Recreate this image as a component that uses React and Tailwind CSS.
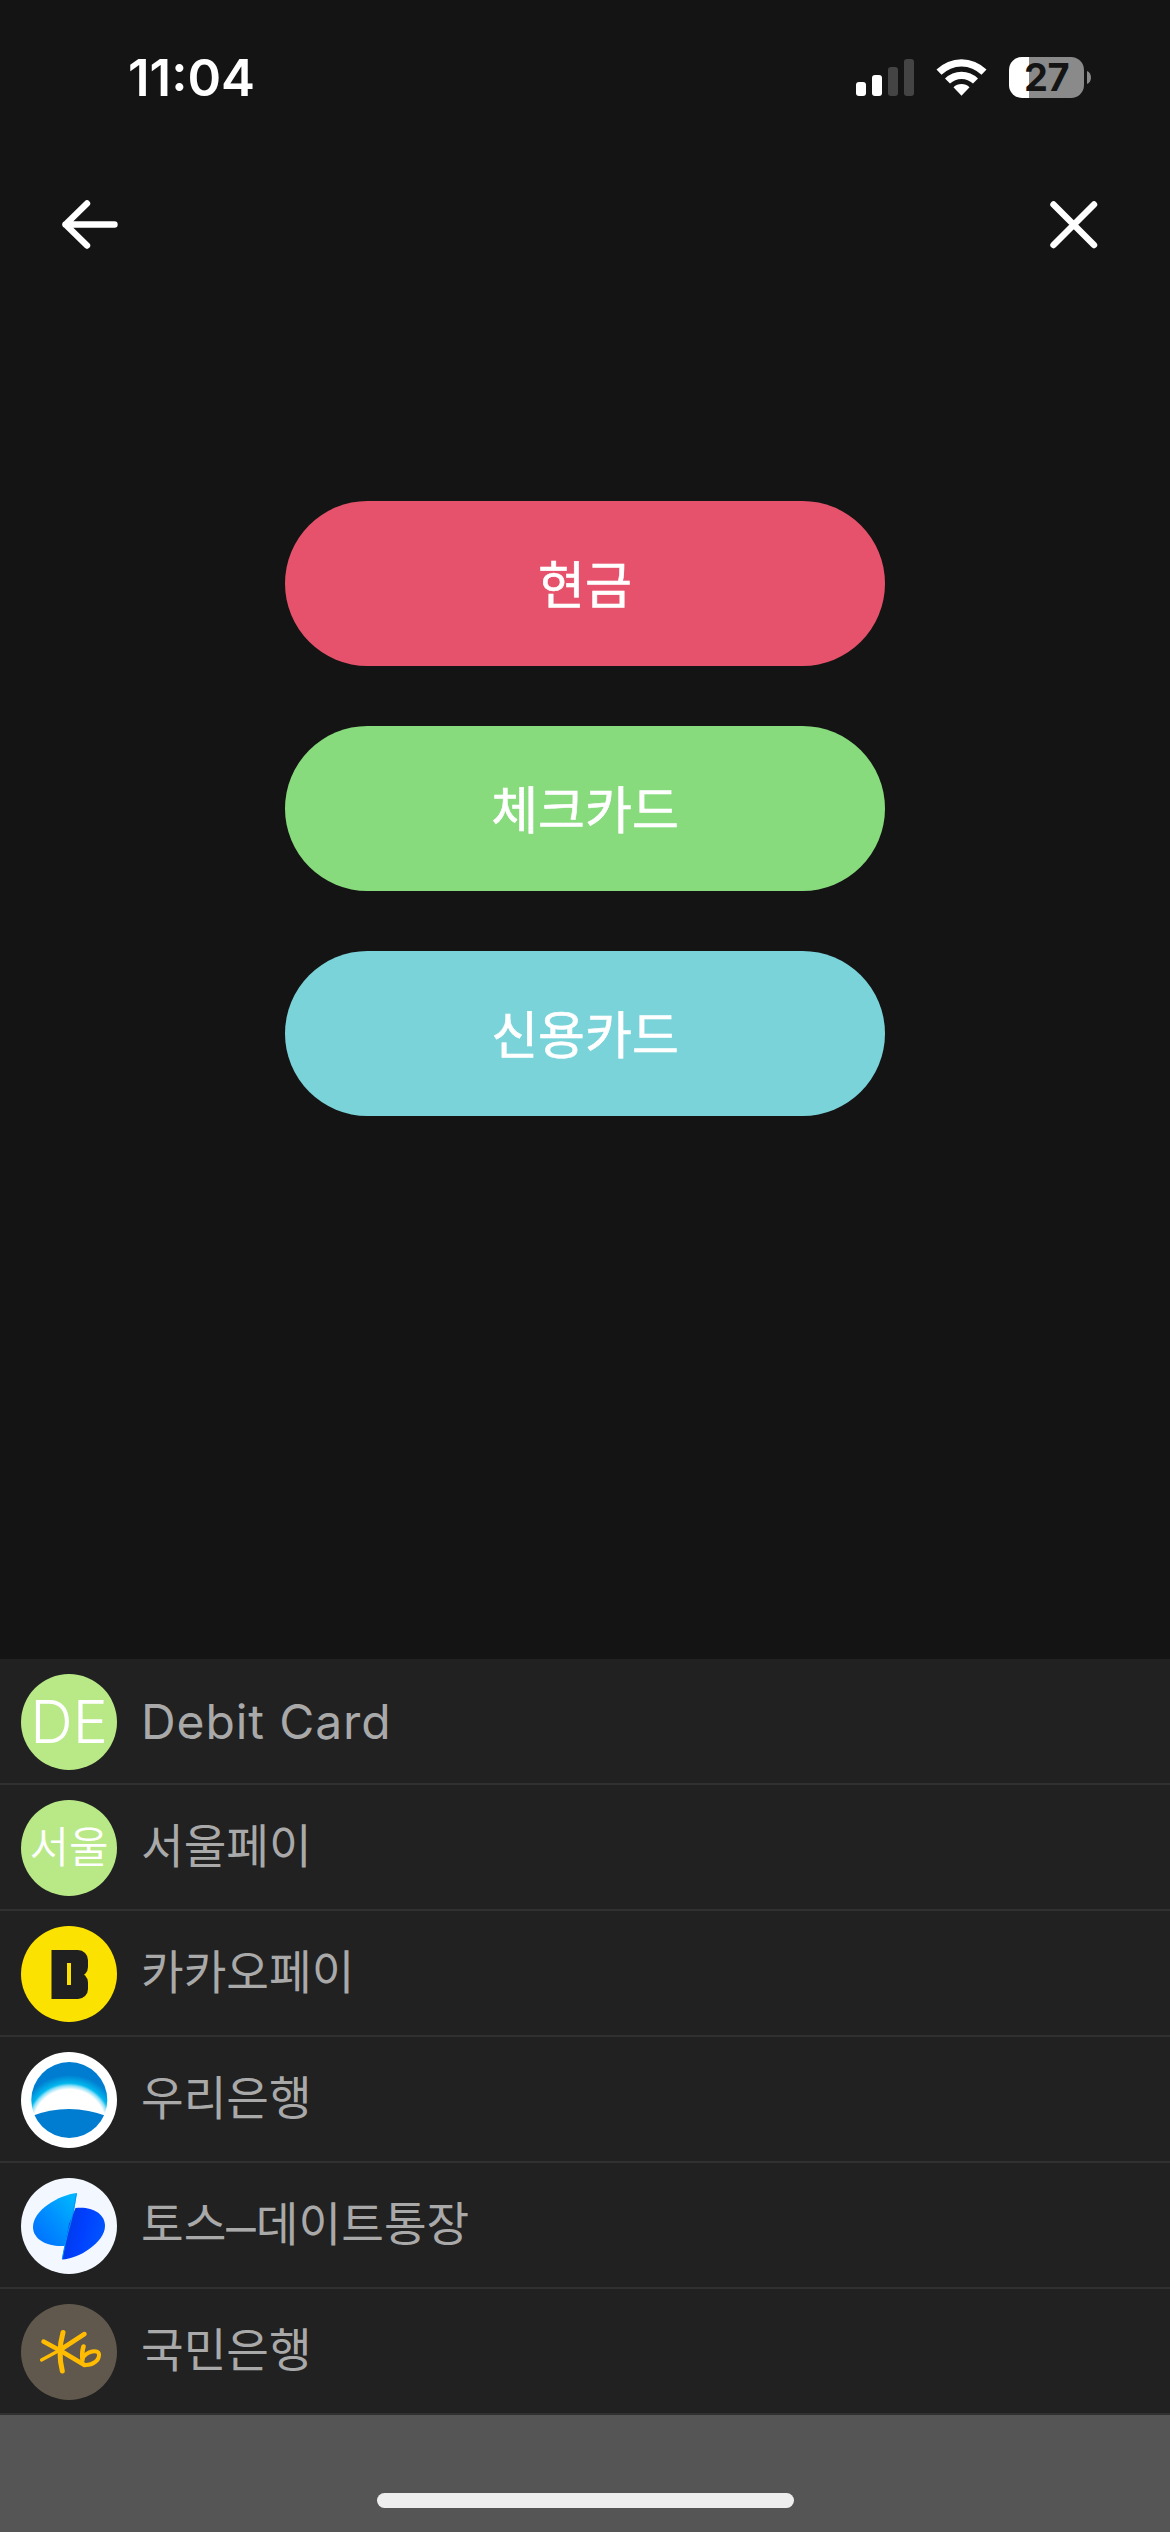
import React from 'react'

const methods = [
  { name: '현금', color: 'bg-[#e6526b]' },
  { name: '체크카드', color: 'bg-[#87db7d]' },
  { name: '신용카드', color: 'bg-[#7bd3da]' },
]

const accounts = [
  {
    name: 'Debit Card',
    icon: <Initials text="DE" className="text-[59px]" />,
    size: 'text-[48px] tracking-[0.9px] pb-0',
  },
  { name: '서울페이', icon: <Initials text="서울" className="text-[43px]" /> },
  { name: '카카오페이', icon: <KakaoLogo /> },
  { name: '우리은행', icon: <WooriLogo /> },
  {
    name: (
      <>
        토스<span className="text-[59px] leading-[0] font-light align-[-7px]">–</span>데이트통장
      </>
    ),
    icon: <TossLogo />,
  },
  { name: '국민은행', icon: <KbLogo /> },
]

function Initials({ text, className }) {
  return (
    <div className="size-24 rounded-full bg-[#b8e986] flex items-center justify-center text-white font-[350]">
      <span className={`leading-none whitespace-nowrap ${className}`}>{text}</span>
    </div>
  )
}

function KakaoLogo() {
  return (
    <svg viewBox="0 0 96 96" className="size-24">
      <circle cx="48" cy="48" r="48" fill="#fce200" />
      <g fill="#202020">
        <rect x="30.5" y="24" width="20" height="49" />
        <rect x="40" y="24" width="27" height="27" rx="10" />
        <rect x="40" y="46.5" width="27" height="26.5" rx="10" />
      </g>
      <rect x="46" y="37" width="4" height="22" fill="#fce200" />
    </svg>
  )
}

function WooriLogo() {
  return (
    <svg viewBox="0 0 96 96" className="size-24">
      <defs>
        <radialGradient id="woori-glow" gradientUnits="userSpaceOnUse" cx="48.3" cy="74" r="51">
          <stop offset="0.72" stopColor="#ffffff" />
          <stop offset="0.79" stopColor="#8ee0f8" />
          <stop offset="0.84" stopColor="#00b7ee" />
          <stop offset="1" stopColor="#007dd0" />
        </radialGradient>
        <clipPath id="woori-clip">
          <circle cx="48.3" cy="48" r="38" />
        </clipPath>
      </defs>
      <circle cx="48" cy="48" r="48" fill="#fff" />
      <g clipPath="url(#woori-clip)">
        <rect width="96" height="96" fill="url(#woori-glow)" />
        <path d="M8 65 Q48 49 88 65 V96 H8 Z" fill="#007dd0" />
      </g>
    </svg>
  )
}

function TossLogo() {
  return (
    <svg viewBox="0 0 96 96" className="size-24">
      <defs>
        <linearGradient id="toss-left" x1="0.1" y1="0.9" x2="0.9" y2="0.1">
          <stop offset="0" stopColor="#0072ff" />
          <stop offset="0.5" stopColor="#0090ff" />
          <stop offset="1" stopColor="#00b4ff" />
        </linearGradient>
        <linearGradient id="toss-right" x1="0" y1="0.2" x2="1" y2="0.5">
          <stop offset="0" stopColor="#0038e0" />
          <stop offset="0.5" stopColor="#0040ff" />
          <stop offset="1" stopColor="#0056ff" />
        </linearGradient>
      </defs>
      <circle cx="48" cy="48" r="48" fill="#f3f7ff" />
      <path d="M55.8 15 C38 17 12 32 12 49 C12 62 27 69 43 68 L49 60 Z" fill="url(#toss-left)" />
      <path d="M54.5 30 C70 28 84 35 84 48 C84 64 58 81 41 81.5 L48 46 Z" fill="url(#toss-right)" />
      <path d="M55.5 15.5 Q51 42 47.8 51 Q44 65 41.3 81" fill="none" stroke="#0097ff" strokeWidth="1" />
    </svg>
  )
}

function KbLogo() {
  return (
    <svg viewBox="0 0 96 96" className="size-24">
      <circle cx="48" cy="48" r="48" fill="#60584c" />
      <g fill="none" stroke="#ffbc00" strokeLinecap="round" strokeLinejoin="round">
        <path d="M42 28.5 Q36.5 48 41.3 67" strokeWidth="5" />
        <path d="M63.5 30 L39 46" strokeWidth="4.5" />
        <path d="M39 46 L20.5 56" strokeWidth="3.2" />
        <path d="M22.5 37.5 L40 47 L63.5 61" strokeWidth="4.5" />
        <path d="M62.5 42.5 C61 47 61 51 61.5 56" strokeWidth="4.6" />
        <path d="M61.5 54 C66 47.5 77.5 44.5 78 50.5 C78.3 56.5 71.5 61.5 64 61" strokeWidth="4" />
      </g>
    </svg>
  )
}

function StatusIcons() {
  return (
    <div className="flex">
      <svg width="58" height="41" viewBox="0 0 58 41" className="mr-[22px]">
        <rect x="0" y="25" width="10" height="14" rx="3" fill="#fff" />
        <rect x="16" y="18" width="10" height="21" rx="3" fill="#fff" />
        <rect x="32" y="10" width="10" height="29" rx="3" fill="#444" />
        <rect x="48" y="2" width="10" height="37" rx="3" fill="#444" />
      </svg>
      <svg width="51" height="41" viewBox="0 0 51 41" className="mr-[22px]">
        <path d="M0.5 12.5 A35.5 35.5 0 0 1 50.5 12.5 L45.5 17.8 A28.2 28.2 0 0 0 5.5 17.8 Z" fill="#fff" />
        <path d="M9 21.5 A23.5 23.5 0 0 1 42 21.5 L37 26.6 A16.4 16.4 0 0 0 14 26.6 Z" fill="#fff" />
        <path d="M17.5 30.3 A11.5 11.5 0 0 1 33.5 30.3 L25.5 38.7 Z" fill="#fff" />
      </svg>
      <div className="w-[75px] h-[41px] rounded-[13px] bg-gradient-to-r from-white from-[27%] to-[#8a8a8a] to-[27%] flex items-center justify-center text-[38px] leading-[41px] font-bold tracking-[-0.5px] text-[#141414]">
        27
      </div>
      <svg width="4" height="41" viewBox="0 0 4 41" className="ml-[3px]">
        <path d="M0 14 C5.3 16 5.3 25 0 27 Z" fill="#8a8a8a" />
      </svg>
    </div>
  )
}

export default function App() {
  return (
    <div className="w-[1170px] h-[2532px] flex flex-col bg-[#141414] font-[Inter,'Noto_Sans_CJK_KR',sans-serif]">
      <header className="h-[156px] shrink-0 flex items-start justify-between pl-[128px] pr-[79px] pt-[57px] text-white">
        <span className="text-[51px] leading-[42px] font-semibold">11:04</span>
        <StatusIcons />
      </header>

      <nav className="h-[345px] shrink-0 flex items-start justify-between pl-[60px] pr-[70px] pt-[42px]">
        <button aria-label="Back">
          <svg width="60" height="54" viewBox="0 0 60 54" fill="none" stroke="#fff" strokeWidth="6.4" strokeLinecap="round" strokeLinejoin="round">
            <path d="M27 5.5 L5.5 26.5 L27 47.5 M5.5 26.5 H54.5" />
          </svg>
        </button>
        <button aria-label="Close">
          <svg width="52" height="54" viewBox="0 0 52 54" fill="none" stroke="#fff" strokeWidth="6.4" strokeLinecap="round">
            <path d="M5.5 6.5 L46 47 M46 6.5 L5.5 47" />
          </svg>
        </button>
      </nav>

      <main className="grow flex flex-col items-center gap-[60px]">
        {methods.map((method) => (
          <button
            key={method.name}
            className={`w-[600px] h-[165px] pt-[3px] rounded-full text-white text-[51px] leading-none [-webkit-text-stroke:0.6px_white] ${method.color}`}
          >
            {method.name}
          </button>
        ))}
      </main>

      <ul className="shrink-0 bg-[#212121]">
        {accounts.map((account, idx) => (
          <li key={idx} className="h-[126px] flex items-center gap-6 pl-[21px] pt-[1px] border-b-2 border-[#303030]">
            {account.icon}
            <span className={`leading-none whitespace-nowrap text-[#a9a9a9] ${account.size || 'text-[46.4px] pb-[2px]'}`}>
              {account.name}
            </span>
          </li>
        ))}
      </ul>

      <footer className="h-[117px] shrink-0 bg-[#555] flex justify-center pt-[78px]">
        <div className="w-[417px] h-[15px] rounded-full bg-[#eee]" />
      </footer>
    </div>
  )
}
